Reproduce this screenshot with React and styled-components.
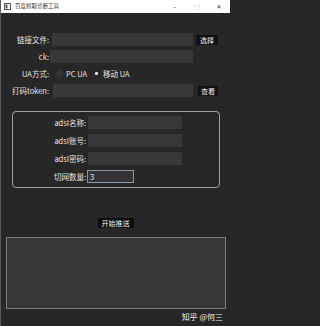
import { styled, createGlobalStyle } from "styled-components";

const GlobalStyle = createGlobalStyle`
  html, body {
    margin: 0;
    padding: 0;
    background: #272727;
  }
  * {
    box-sizing: border-box;
  }
`;

export default function App() {
  return (
    <>
      <GlobalStyle />
      <Window>
        <TitleBar>
          <AppIcon>
            <svg width="7" height="7" viewBox="0 0 7 7">
              <rect x="0.5" y="0.5" width="6" height="6" fill="#fff" stroke="#555" />
              <rect x="1.5" y="1.5" width="2" height="4" fill="#555" />
            </svg>
          </AppIcon>
          <Title>百度抓取诊断工具</Title>
          <Controls>
            <Ctl>–</Ctl>
            <Ctl $dim>□</Ctl>
            <Ctl>✕</Ctl>
          </Controls>
        </TitleBar>

        <TopForm>
          <Label>链接文件:</Label>
          <Field />
          <SmallButton>选择</SmallButton>

          <Label>ck:</Label>
          <Field $shift={-2} />
          <span />

          <Label>UA方式:</Label>
          <RadioRow>
            <Radio />
            <RadioText>PC UA</RadioText>
            <Radio $checked />
            <RadioText>移动 UA</RadioText>
          </RadioRow>
          <span />

          <Label>打码token:</Label>
          <Field $shift={1} />
          <SmallButton $narrow>查看</SmallButton>
        </TopForm>

        <GroupBox>
          <GroupLabel>adsl名称:</GroupLabel>
          <GroupField />
          <GroupLabel>adsl账号:</GroupLabel>
          <GroupField />
          <GroupLabel>adsl密码:</GroupLabel>
          <GroupField />
          <GroupLabel>切网数量:</GroupLabel>
          <SpinBox>3</SpinBox>
        </GroupBox>

        <StartRow>
          <StartButton>开始推送</StartButton>
        </StartRow>

        <LogArea />

        <Watermark>知乎 @何三</Watermark>
      </Window>
    </>
  );
}

const Window = styled.div`
  width: 230px;
  height: 326px;
  background: #272727;
  border-left: 1px solid #5a5a5a;
  display: flex;
  flex-direction: column;
  font-family: "Noto Sans CJK SC", "Noto Sans", sans-serif;
  font-size: 7.5px;
  color: #e4e4e4;
  overflow: hidden;
`;

const TitleBar = styled.div`
  height: 13px;
  background: #ffffff;
  display: flex;
  align-items: center;
  padding-left: 3px;
  color: #222;
`;

const AppIcon = styled.div`
  width: 7px;
  height: 7px;
  display: flex;
`;

const Title = styled.div`
  margin-left: 4px;
  font-size: 5.5px;
  line-height: 1;
  color: #333;
`;

const Controls = styled.div`
  margin-left: auto;
  display: flex;
  align-items: center;
`;

const Ctl = styled.div`
  width: 22px;
  text-align: center;
  font-family: "DejaVu Sans", sans-serif;
  font-size: 6px;
  color: ${(p) => (p.$dim ? "#c8c8c8" : "#333")};
`;

const TopForm = styled.div`
  margin-top: 20px;
  display: grid;
  grid-template-columns: 48px 1fr 22px;
  grid-auto-rows: 13px;
  column-gap: 3px;
  row-gap: 4px;
  padding-right: 12px;
  align-items: center;
`;

const Label = styled.div`
  text-align: right;
  white-space: nowrap;
  line-height: 13px;
`;

const Field = styled.div`
  height: 13px;
  background: #383838;
  margin-left: ${(p) => p.$shift || 0}px;
`;

const SmallButton = styled.div`
  height: 10px;
  background: #111;
  color: #f2f2f2;
  display: flex;
  align-items: center;
  justify-content: center;
  font-size: 7px;
  border-radius: 1px;
  margin-left: ${(p) => (p.$narrow ? "2px" : "0")};
`;

const RadioRow = styled.div`
  display: flex;
  align-items: center;
  padding-left: 4px;
`;

const Radio = styled.span`
  width: 7px;
  height: 7px;
  border-radius: 50%;
  background: ${(p) => (p.$checked ? "#2a2a2a" : "#333")};
  margin-right: 3px;
  display: flex;
  align-items: center;
  justify-content: center;
  &::after {
    content: "";
    width: 2.5px;
    height: 2.5px;
    border-radius: 50%;
    background: ${(p) => (p.$checked ? "#f0f0f0" : "transparent")};
  }
`;

const RadioText = styled.span`
  margin-right: 6px;
  white-space: nowrap;
`;

const GroupBox = styled.div`
  margin: 14px 10px 0 11px;
  height: 77px;
  border: 1px solid #a0a0a0;
  border-radius: 4px;
  padding: 4px 0 4px 0;
  display: grid;
  grid-template-columns: 73px 94px;
  grid-auto-rows: 13px;
  column-gap: 2px;
  row-gap: 5px;
  align-items: center;
`;

const GroupLabel = styled.div`
  text-align: right;
  white-space: nowrap;
  line-height: 13px;
`;

const GroupField = styled.div`
  height: 13px;
  background: #383838;
`;

const SpinBox = styled.div`
  width: 47px;
  height: 13px;
  margin-left: -1px;
  background: #333;
  border: 1px solid #8899aa;
  padding-left: 2px;
  line-height: 11px;
  color: #f0f0f0;
`;

const StartRow = styled.div`
  margin-top: 30px;
  display: flex;
  justify-content: center;
`;

const StartButton = styled.div`
  width: 36px;
  height: 10px;
  background: #0d0d0d;
  color: #f2f2f2;
  font-size: 7px;
  display: flex;
  align-items: center;
  justify-content: center;
`;

const LogArea = styled.div`
  margin: 9px 4px 0 5px;
  height: 72px;
  background: #373737;
  border: 1px solid #7e7e7e;
`;

const Watermark = styled.div`
  margin-top: 2px;
  padding-right: 7px;
  text-align: right;
  font-size: 8px;
  color: #f4f4f4;
`;
